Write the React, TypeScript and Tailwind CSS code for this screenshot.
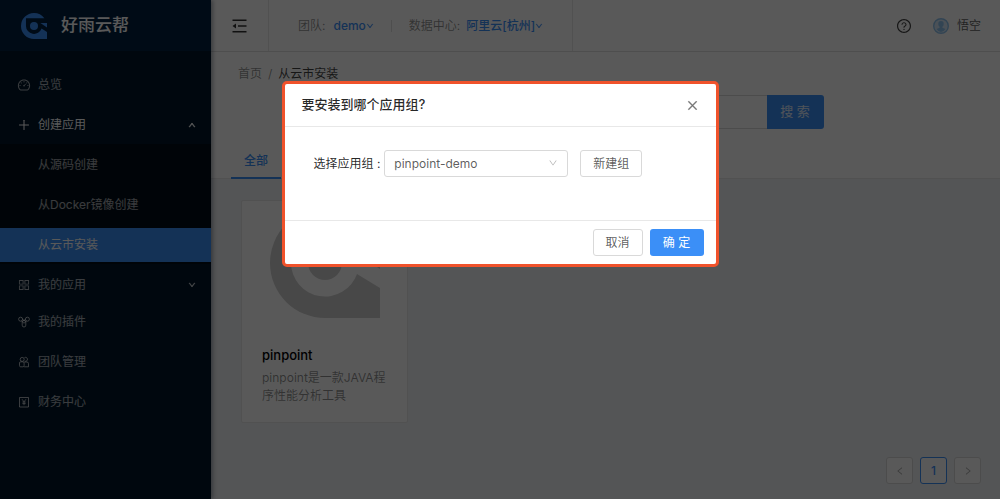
import { useState } from 'react';
import {
  AiOutlineAppstore,
  AiOutlineClose,
  AiOutlineDashboard,
  AiOutlineDown,
  AiOutlineLeft,
  AiOutlinePlus,
  AiOutlineQuestionCircle,
  AiOutlineRight,
} from 'react-icons/ai';

const CREATE_ITEMS = [
  { key: 'source', label: '从源码创建' },
  { key: 'docker', label: '从Docker镜像创建' },
  { key: 'market', label: '从云市安装' },
];

const APPS = [{ name: 'pinpoint', desc: 'pinpoint是一款JAVA程序性能分析工具' }];

function Logo({ className }: { className: string }) {
  return (
    <svg viewBox="0 0 110 110" fill="currentColor" className={className} aria-hidden="true">
      <path d="M99 22A55 55 0 0 0 55 0A55 55 0 0 0 0 55A55 55 0 0 0 55 110H110V80L87 66A34 34 0 0 1 21 55V22Z" />
      <path d="M82 42H110V61Z" />
      <circle cx="55" cy="55" r="17" />
    </svg>
  );
}

function FoldIcon() {
  return (
    <svg viewBox="0 0 15 14" className="h-3.5 w-[15px]" aria-hidden="true">
      <path d="M.5 1.300h14M6 7h8.500M.5 12.700h14" stroke="currentColor" strokeWidth="1.400" />
      <path d="M.5 7 4 4.400v5.200z" fill="currentColor" />
    </svg>
  );
}

function PluginIcon() {
  return (
    <svg viewBox="0 0 12 12" fill="none" stroke="currentColor" className="mx-px size-3">
      <circle cx="2.6" cy="3.2" r="2" />
      <circle cx="9.4" cy="3.2" r="2" />
      <rect x="4.2" y="4.5" width="3.6" height="6.5" rx="1.8" />
      <path d="M3.5 5.2 6 7.2 8.5 5.2M4.5 2.8 6 5l1.5-2.2" />
    </svg>
  );
}

function TeamIcon() {
  return (
    <svg viewBox="0 0 12 12" fill="none" stroke="currentColor" className="mx-px size-3">
      <circle cx="4.2" cy="3.4" r="2" />
      <path d="M6.5 1.6a2 2 0 1 1 .6 3.7" />
      <rect x="1.5" y="5.8" width="4.6" height="5" rx="1.2" />
      <path d="M6.1 6h2.8a1.6 1.6 0 0 1 1.6 1.6v3.2H6.1" />
    </svg>
  );
}

function FinanceIcon() {
  return (
    <svg viewBox="0 0 12 12" fill="none" stroke="currentColor" className="mx-px size-3">
      <path d="M1.5 1.5h9V11h-9z" />
      <path d="M4 3.2l2 2.6 2-2.6M6 5.8v3.4M4.3 6h3.4M4.3 7.6h3.4" strokeWidth=".9" />
    </svg>
  );
}

function Avatar() {
  return (
    <svg viewBox="0 0 16 16" className="size-4" aria-hidden="true">
      <circle cx="8" cy="8" r="7.3" fill="#d6e9fa" stroke="#8fc3ee" strokeWidth="1.4" />
      <path
        d="M8 3a2.7 2.7 0 0 1 2.7 2.9c0 1.300-.6 2.200-1.300 2.800v1l3 1.400A6 6 0 0 1 8 14a6 6 0 0 1-4.400-2.900l3-1.400v-1C5.900 8.100 5.300 7.200 5.300 5.900A2.700 2.700 0 0 1 8 3z"
        fill="#8fc3ee"
      />
    </svg>
  );
}

const MENU_ITEM = 'flex h-[34px] items-center gap-[7px] pl-[17px] pr-[15px]';

function Sidebar() {
  return (
    <aside className="relative w-[211px] shrink-0 bg-[#001529] text-white/65 shadow-[2px_0_4px_rgba(0,21,41,0.35)]">
      <a href="#" className="flex h-[51px] items-center gap-3.5 bg-[#002140] pl-[21px] text-white">
        <Logo className="size-[26px] text-[#3b8ff7]" />
        <span className="text-[17px] font-medium">好雨云帮</span>
      </a>

      <nav className="pt-[17px]">
        <a href="#" className={MENU_ITEM}>
          <AiOutlineDashboard className="size-3.5" />
          总览
        </a>
        <button type="button" className={`${MENU_ITEM} mt-1.5 w-full text-white`}>
          <AiOutlinePlus className="size-3.5" />
          创建应用
          <AiOutlineDown className="ml-auto size-2 rotate-180 stroke-[80]" />
        </button>
        <ul className="mt-0.5 space-y-1.5 bg-[#000c17] pt-1 pb-0.5">
          {CREATE_ITEMS.map((item) => (
            <li key={item.key}>
              <a
                href="#"
                className={`flex h-[34px] items-center pl-[38px] ${
                  item.key === 'market' ? 'bg-[#3b8ff7] text-white' : ''
                }`}
              >
                {item.label}
              </a>
            </li>
          ))}
        </ul>
        <button type="button" className={`${MENU_ITEM} mt-1 w-full`}>
          <AiOutlineAppstore className="size-3.5" />
          我的应用
          <AiOutlineDown className="ml-auto size-2 stroke-[80]" />
        </button>
        <div className="mt-[3px] space-y-1.5">
          <a href="#" className={MENU_ITEM}>
            <PluginIcon />
            我的插件
          </a>
          <a href="#" className={MENU_ITEM}>
            <TeamIcon />
            团队管理
          </a>
          <a href="#" className={MENU_ITEM}>
            <FinanceIcon />
            财务中心
          </a>
        </div>
      </nav>
    </aside>
  );
}

function TopBar() {
  return (
    <header className="flex h-[52px] items-center border-b border-[#e0e0e0] bg-white pr-[19px]">
      <button
        type="button"
        aria-label="收起菜单"
        className="flex h-full w-[58px] items-center justify-center border-r border-[#e8e8e8] text-black/80"
      >
        <FoldIcon />
      </button>
      <div className="flex h-full items-center border-r border-[#e8e8e8] pr-[29px] pl-[29px] text-black/45">
        <span>团队:</span>
        <button type="button" className="ml-2 flex items-center font-medium text-[#3b8ff7]">
          demo
          <AiOutlineDown className="size-2 stroke-[40]" />
        </button>
        <span className="mx-[17px] h-3 w-px bg-[#e0e0e0]" />
        <span>数据中心:</span>
        <button type="button" className="ml-1.5 flex items-center font-medium text-[#3b8ff7]">
          阿里云[杭州]
          <AiOutlineDown className="size-2 stroke-[40]" />
        </button>
      </div>
      <button type="button" aria-label="帮助" className="ml-auto text-black/75">
        <AiOutlineQuestionCircle className="size-4" />
      </button>
      <button type="button" className="ml-[21px] flex items-center gap-2 text-black/65">
        <Avatar />
        悟空
      </button>
    </header>
  );
}

function PageHeader() {
  return (
    <div className="border-b border-[#e8e8e8] bg-white pt-3">
      <div className="flex gap-1.5 px-[27px] leading-5 text-black/45">
        <a href="#">首页</a>
        <span>/</span>
        <span className="text-black/75">从云市安装</span>
      </div>
      <form className="mx-auto mt-[11px] flex h-[34px] max-w-[436px]" onSubmit={(e) => e.preventDefault()}>
        <input
          type="text"
          aria-label="搜索应用"
          className="min-w-0 flex-1 rounded-l-[3px] border border-r-0 border-[#d9d9d9] px-3"
        />
        <button type="submit" className="w-[57px] rounded-r-[3px] bg-[#3b8ff7] text-[13px] text-white/85">
          搜 索
        </button>
      </form>
      <div className="mt-4 -mb-px flex px-5">
        <button
          type="button"
          className="h-[34px] border-b-2 border-[#3b8ff7] px-[13px] font-medium text-[#3b8ff7]"
        >
          全部
        </button>
      </div>
    </div>
  );
}

function AppCard({ name, desc }: { name: string; desc: string }) {
  return (
    <article className="h-[223px] w-[167px] rounded-xs border border-[#e8e8e8] bg-white px-5 pt-[7px]">
      <Logo className="mx-auto size-[110px] text-[#cfcfcf]" />
      <h3 className="mt-[27px] text-[13px] leading-5 font-medium text-black">{name}</h3>
      <p className="mt-1 leading-[18px] text-black/45">{desc}</p>
    </article>
  );
}

const PAGE_BUTTON = 'flex size-[27px] items-center justify-center rounded-[3px] border bg-white';

function Pagination() {
  return (
    <div className="mt-[34px] flex justify-end gap-[7px] pr-[19px]">
      <button type="button" aria-label="上一页" className={`${PAGE_BUTTON} border-[#d9d9d9] text-black/35`}>
        <AiOutlineLeft className="size-2.5" />
      </button>
      <button type="button" className={`${PAGE_BUTTON} border-[#3b8ff7] font-medium text-[#3b8ff7]`}>
        1
      </button>
      <button type="button" aria-label="下一页" className={`${PAGE_BUTTON} border-[#d9d9d9] text-black/35`}>
        <AiOutlineRight className="size-2.5" />
      </button>
    </div>
  );
}

function InstallDialog() {
  const [group, setGroup] = useState('pinpoint-demo');

  return (
    <div className="fixed inset-0 flex items-start justify-center bg-black/65 pt-[81px]">
      <div
        role="dialog"
        aria-labelledby="install-title"
        className="w-[437px] rounded-[5px] border-3 border-[#f0522b] bg-white text-black/65"
      >
        <div className="flex h-[43px] items-center justify-between border-b border-[#e8e8e8] px-[17px]">
          <h2 id="install-title" className="text-[13px] font-medium text-black/85">
            要安装到哪个应用组?
          </h2>
          <button type="button" aria-label="关闭" className="text-black/50">
            <AiOutlineClose className="size-[13px] stroke-[30]" />
          </button>
        </div>

        <div className="flex h-[93px] items-start pt-[23px] pl-[29px]">
          <label htmlFor="group" className="leading-[27px] text-black/85">
            选择应用组 :
          </label>
          <div className="relative ml-1">
            <select
              id="group"
              value={group}
              onChange={(e) => setGroup(e.target.value)}
              className="h-[27px] w-[184px] appearance-none rounded-[3px] border border-[#d9d9d9] bg-white px-[9px]"
            >
              <option value="pinpoint-demo">pinpoint-demo</option>
            </select>
            <AiOutlineDown className="pointer-events-none absolute top-2 right-2.5 size-2.5 text-black/30" />
          </div>
          <button type="button" className="ml-3 h-[27px] w-[62px] rounded-[3px] border border-[#d9d9d9]">
            新建组
          </button>
        </div>

        <div className="flex h-[44px] items-center justify-end gap-[7px] border-t border-[#e8e8e8] pr-3">
          <button type="button" className="h-[27px] w-[50px] rounded-[3px] border border-[#d9d9d9]">
            取消
          </button>
          <button type="button" className="h-[27px] w-[54px] rounded-[3px] bg-[#3b8ff7] text-white">
            确 定
          </button>
        </div>
      </div>
    </div>
  );
}

export default function App() {
  return (
    <div className="flex min-h-screen bg-[#f0f2f5] font-['Inter','Noto_Sans_CJK_SC',sans-serif] text-xs">
      <Sidebar />
      <main className="min-w-0 flex-1">
        <TopBar />
        <PageHeader />
        <div className="flex flex-wrap gap-5 px-[30px] pt-[21px]">
          {APPS.map((app) => (
            <AppCard key={app.name} name={app.name} desc={app.desc} />
          ))}
        </div>
        <Pagination />
      </main>
      <InstallDialog />
    </div>
  );
}
